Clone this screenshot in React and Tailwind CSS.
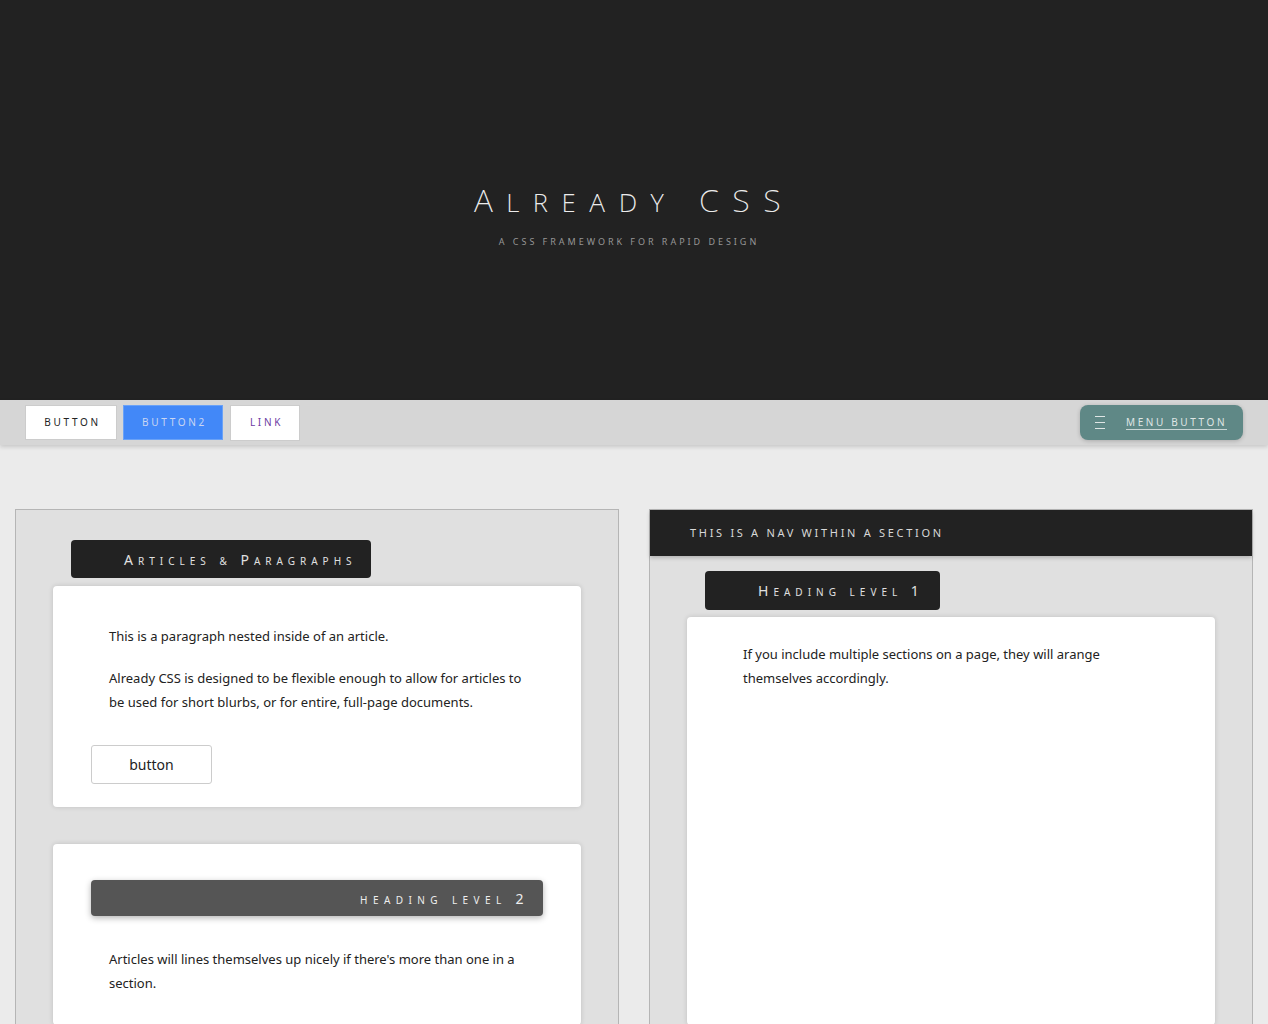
import React from 'react';

// fake small caps: lowercase letters (and &) rendered as smaller capitals
const SmallCaps = ({ text }) =>
    text.split('').map((c, i) =>
        (c >= 'a' && c <= 'z') || c === '&' ? (
            <span key={i} className="text-[10px]">{c.toUpperCase()}</span>
        ) : (
            <span key={i}>{c}</span>
        )
    );

const NavButton = ({ children, className }) => (
    <button className={`h-[35px] border text-[10px] uppercase tracking-[2.7px] ${className}`}>
        {children}
    </button>
);

const Heading = ({ text, className }) => (
    <h2 className={`inline-flex items-center bg-[#222] rounded-[4px] text-[#e0e0e0] text-[14px] tracking-[5px] ${className}`}>
        <span><SmallCaps text={text} /></span>
    </h2>
);

const App = () => {
    return (
        <div className="min-h-screen bg-[#ebebeb] font-['Noto_Sans',sans-serif] text-[#222]">
            {/* Hero */}
            <header className="h-[400px] bg-[#222] flex flex-col items-center pt-[178px]">
                <h1 className="text-[32px] leading-[44px] font-extralight tracking-[0.42em] [font-variant:small-caps] text-[#ececec]">
                    Already CSS
                </h1>
                <p className="mt-[14px] mr-[10px] text-[9px] leading-[12px] uppercase tracking-[0.33em] text-[#969696]">
                    A CSS framework for rapid design
                </p>
            </header>

            {/* Top nav */}
            <nav className="relative z-10 h-[45px] bg-[#d6d6d6] shadow-[0_2px_4px_rgba(0,0,0,0.15)] flex items-center justify-between px-[25px]">
                <div className="flex items-center gap-[6px]">
                    <NavButton className="w-[92px] pl-[3px] bg-white border-[#cccccc] text-[#222]">Button</NavButton>
                    <NavButton className="w-[100px] pl-[3px] bg-[#4288f8] border-[#6aa2f7] text-[#c9d6f2]">Button2</NavButton>
                    <NavButton className="w-[70px] h-[36px] ml-[1px] pl-[3px] bg-white border-[#cccccc] text-[#6b3aa3]">Link</NavButton>
                </div>
                <button className="w-[163px] h-[35px] rounded-[8px] bg-[#5f8886] shadow-[0_1px_4px_rgba(0,0,0,0.2)] flex items-center pl-[15px] text-[#dfe6e5]">
                    <span className="flex flex-col gap-[5px] w-[10px]">
                        <span className="h-[1px] bg-[#dfe6e5]" />
                        <span className="h-[1px] bg-[#dfe6e5]" />
                        <span className="h-[1px] bg-[#dfe6e5]" />
                    </span>
                    <span className="ml-[21px] text-[10px] uppercase tracking-[2.6px] border-b border-[#c9d6d5] leading-[14px]">
                        Menu Button
                    </span>
                </button>
            </nav>

            {/* Sections */}
            <main className="grid grid-cols-2 gap-[30px] px-[15px] pt-[64px]">
                {/* Left section */}
                <section className="bg-[#e0e0e0] border border-[#b5b5b5] px-[37px] pt-[30px] pb-[40px]">
                    <Heading text="Articles & Paragraphs" className="h-[38px] ml-[18px] pl-[53px] pr-[14px]" />

                    <article className="mt-[8px] bg-white rounded-[4px] shadow-[0_0_5px_rgba(0,0,0,0.15)] pt-[38px] pb-[23px]">
                        <p className="px-[56px] text-[13px] leading-[24px]">This is a paragraph nested inside of an article.</p>
                        <p className="mt-[18px] px-[56px] text-[13px] leading-[24px]">
                            Already CSS is designed to be flexible enough to allow for articles to be used for short blurbs, or for entire, full-page documents.
                        </p>
                        <button className="mt-[31px] ml-[38px] w-[121px] h-[39px] border border-[#cccccc] rounded-[3px] bg-white text-[14px] text-[#222]">
                            button
                        </button>
                    </article>

                    <article className="mt-[37px] bg-white rounded-[4px] shadow-[0_0_5px_rgba(0,0,0,0.15)] pt-[36px] pb-[30px]">
                        <div className="mx-[38px] h-[36px] bg-[#555] rounded-[4px] shadow-[0_2px_6px_rgba(0,0,0,0.3)] flex items-center justify-end pr-[14px] text-[#eee] text-[14px] tracking-[5.4px]">
                            <span><SmallCaps text="heading level 2" /></span>
                        </div>
                        <p className="mt-[31px] px-[56px] text-[13px] leading-[24px]">
                            Articles will lines themselves up nicely if there's more than one in a section.
                        </p>
                    </article>
                </section>

                {/* Right section */}
                <section className="bg-[#e0e0e0] border border-[#b5b5b5] flex flex-col pb-[40px]">
                    <div className="h-[46px] bg-[#222] shadow-[0_2px_4px_rgba(0,0,0,0.2)] flex items-center pl-[40px] text-[11px] uppercase tracking-[2.7px] text-[#d8d8d8]">
                        This is a nav within a section
                    </div>
                    <div className="mt-[15px] ml-[55px]">
                        <Heading text="Heading level 1" className="h-[39px] pl-[53px] pr-[16px]" />
                    </div>
                    <article className="flex-1 mt-[7px] mx-[37px] bg-white rounded-[4px] shadow-[0_0_5px_rgba(0,0,0,0.15)] pt-[25px] pb-[30px]">
                        <p className="px-[56px] text-[13px] leading-[24px]">
                            If you include multiple sections on a page, they will arange themselves accordingly.
                        </p>
                    </article>
                </section>
            </main>
        </div>
    );
};

export default App;
